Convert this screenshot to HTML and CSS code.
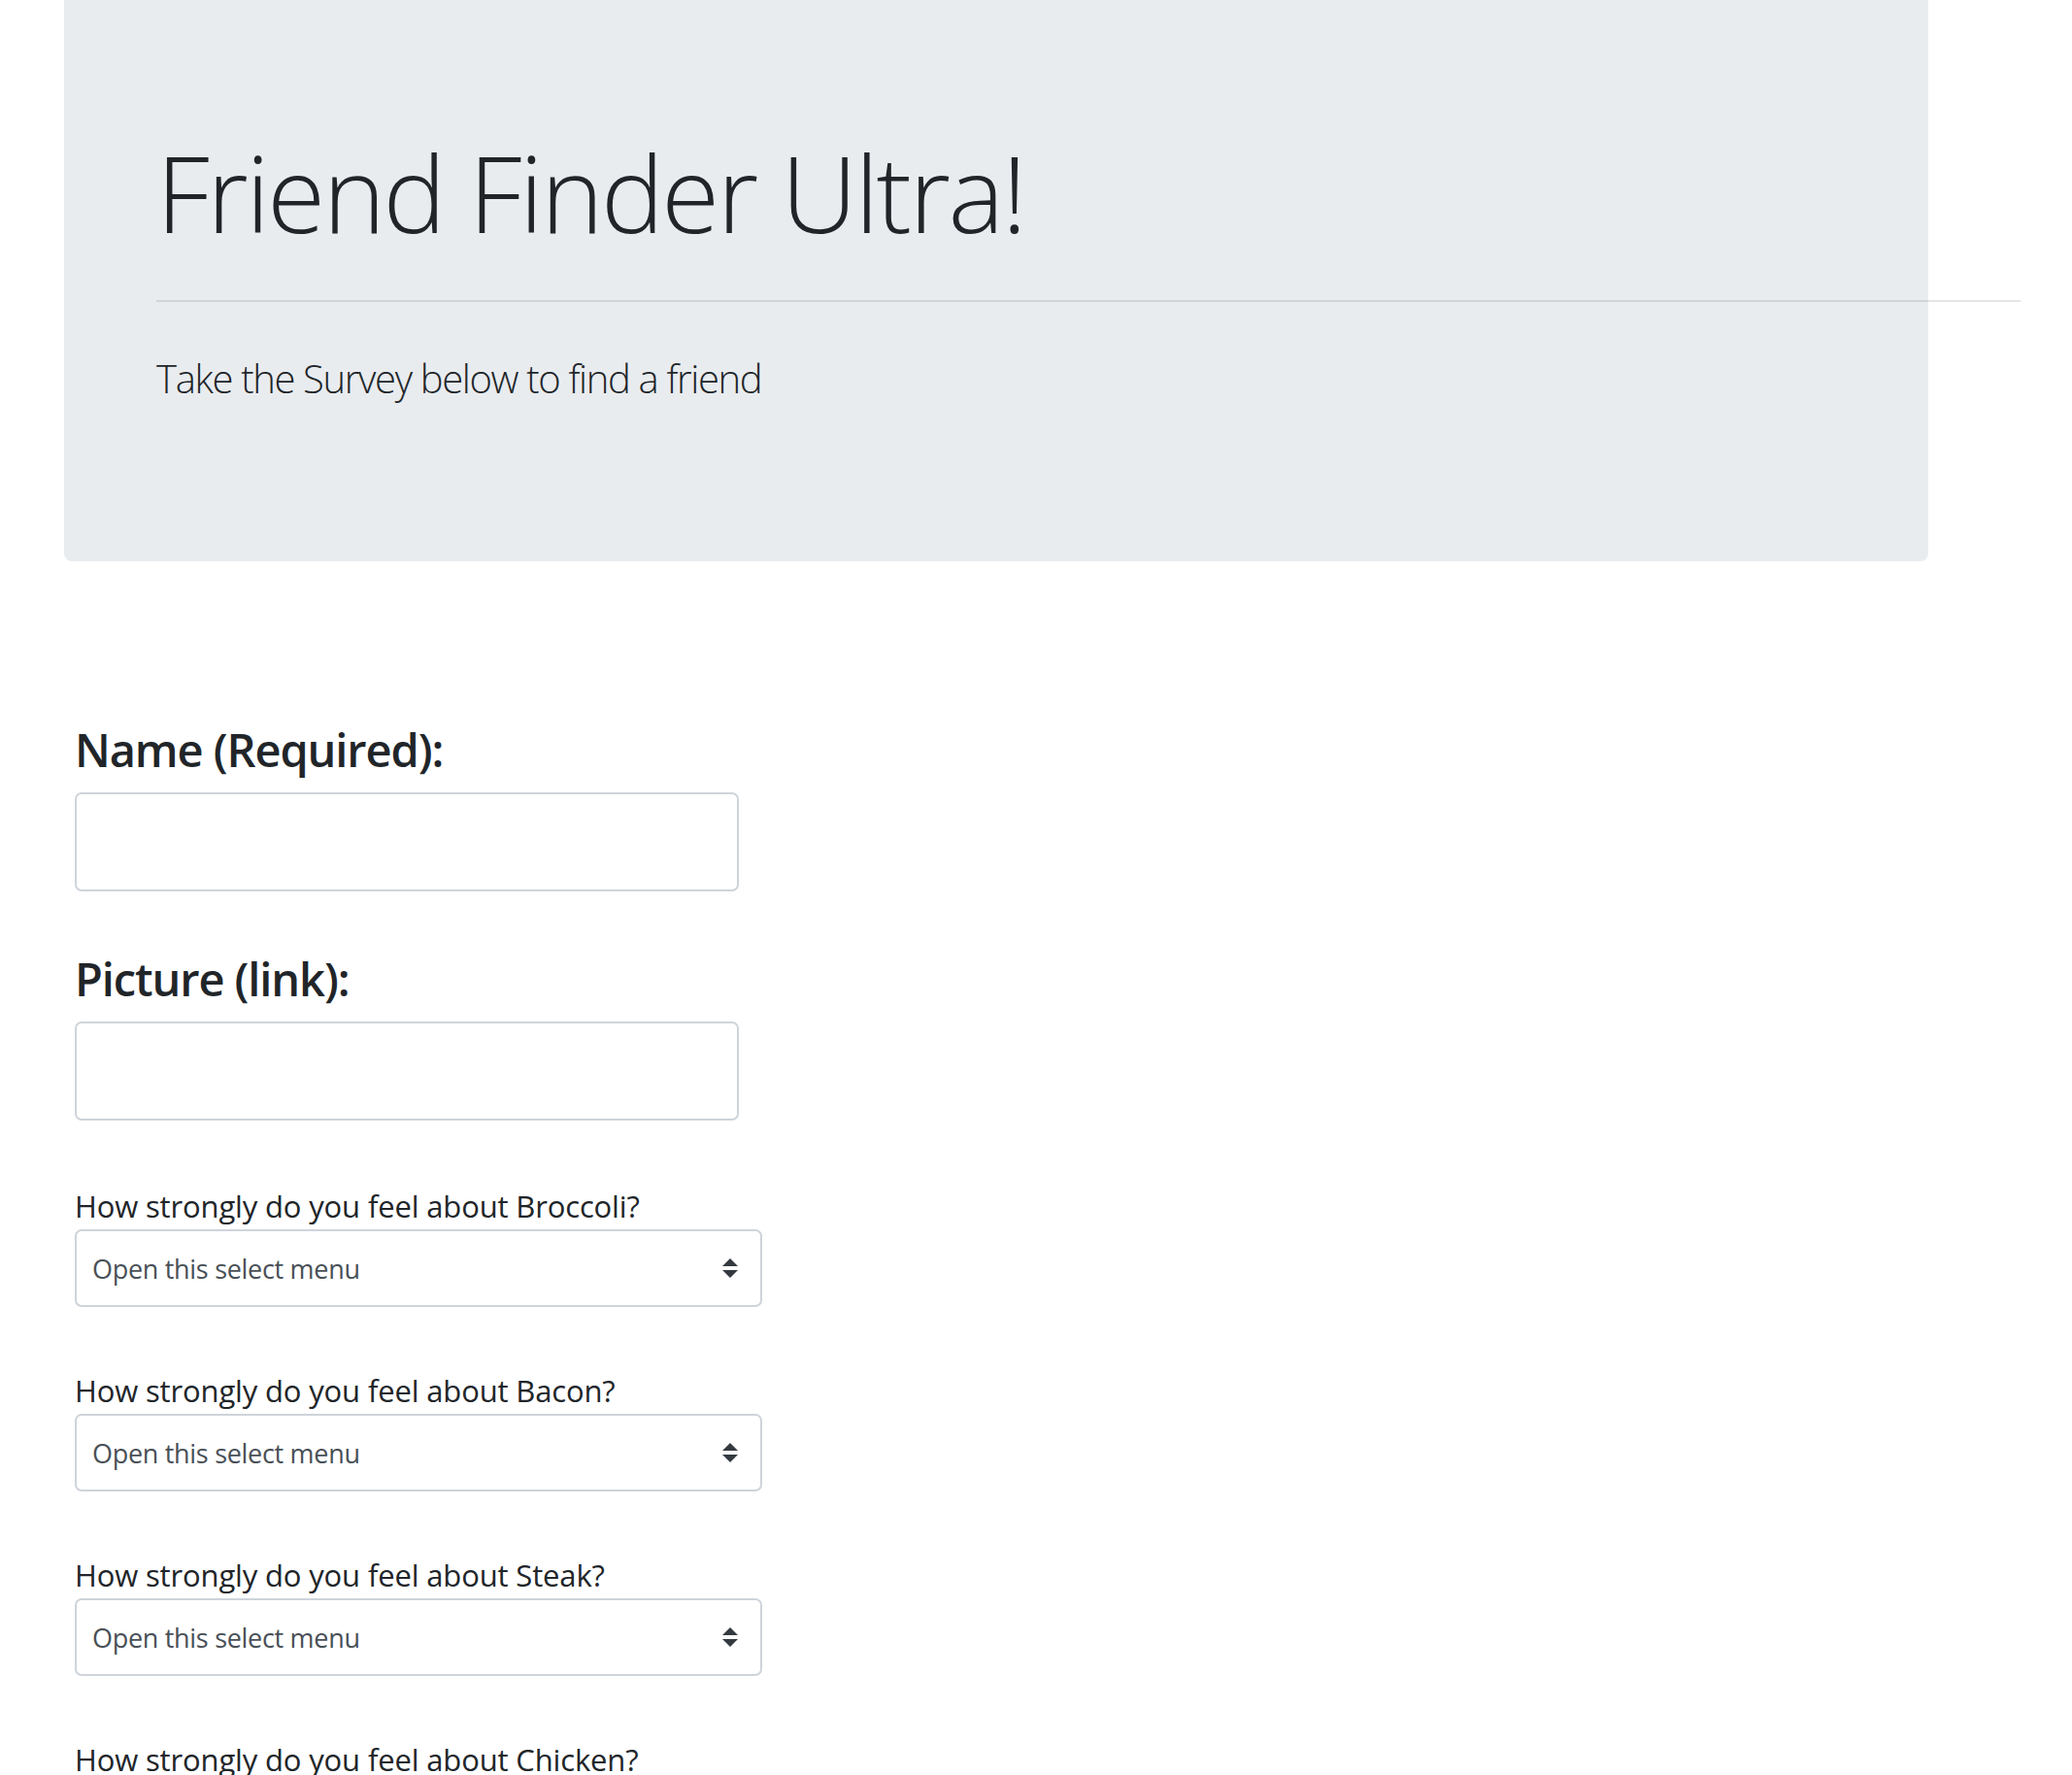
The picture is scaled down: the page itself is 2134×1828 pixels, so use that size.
FILE: index.html
```html
<!DOCTYPE html>
<html lang="en">
<head>
<meta charset="utf-8">
<title>Friend Finder Ultra!</title>
<link rel="stylesheet" href="styles.css">
</head>
<body>
<div class="jumbotron">
  <h1 class="display">Friend Finder Ultra!</h1>
  <hr class="divider">
  <p class="lead">Take the Survey below to find a friend</p>
</div>
<form class="survey">
  <div class="field">
    <label class="big-label" for="name">Name (Required):</label>
    <input class="text-input" id="name" type="text">
  </div>
  <div class="field">
    <label class="big-label" for="pic">Picture (link):</label>
    <input class="text-input" id="pic" type="text">
  </div>
  <div class="question">
    <label class="q-label" for="q1">How strongly do you feel about Broccoli?</label>
    <div class="select-wrap">
      <select class="custom-select" id="q1"><option>Open this select menu</option></select>
      <svg class="arrow" viewBox="0 0 4 5" width="16" height="20"><path d="M2 0L0 2h4zm0 5L0 3h4z" fill="#343a40"/></svg>
    </div>
  </div>
  <div class="question">
    <label class="q-label" for="q2">How strongly do you feel about Bacon?</label>
    <div class="select-wrap">
      <select class="custom-select" id="q2"><option>Open this select menu</option></select>
      <svg class="arrow" viewBox="0 0 4 5" width="16" height="20"><path d="M2 0L0 2h4zm0 5L0 3h4z" fill="#343a40"/></svg>
    </div>
  </div>
  <div class="question">
    <label class="q-label" for="q3">How strongly do you feel about Steak?</label>
    <div class="select-wrap">
      <select class="custom-select" id="q3"><option>Open this select menu</option></select>
      <svg class="arrow" viewBox="0 0 4 5" width="16" height="20"><path d="M2 0L0 2h4zm0 5L0 3h4z" fill="#343a40"/></svg>
    </div>
  </div>
  <div class="question">
    <label class="q-label" for="q4">How strongly do you feel about Chicken?</label>
    <div class="select-wrap">
      <select class="custom-select" id="q4"><option>Open this select menu</option></select>
      <svg class="arrow" viewBox="0 0 4 5" width="16" height="20"><path d="M2 0L0 2h4zm0 5L0 3h4z" fill="#343a40"/></svg>
    </div>
  </div>
</form>
</body>
</html>
```
FILE: styles.css
```css
html, body {
  margin: 0;
  padding: 0;
  background: #ffffff;
}
body {
  font-family: "Open Sans", "Noto Sans", sans-serif;
  color: #212529;
}
.jumbotron {
  margin: 0 0 0 66px;
  width: 1920px;
  box-sizing: border-box;
  background: #e9ecef;
  border-radius: 0 0 8px 8px;
  padding: 131px 96px 157px 95px;
}
.display {
  margin: 0;
  font-size: 109px;
  font-weight: 300;
  line-height: 134px;
  letter-spacing: -2.5px;
}
.divider {
  margin: 44px 0 0 0;
  width: 1920px;
  height: 0;
  border: 0;
  border-top: 2px solid rgba(0, 0, 0, 0.1);
}
.lead {
  margin: 47px 0 0 0;
  font-size: 40px;
  font-weight: 300;
  line-height: 63px;
  letter-spacing: -1.35px;
}
.survey {
  margin: 0 0 0 77px;
  padding-top: 164px;
}
.field {
  display: flex;
  flex-direction: column;
  align-items: flex-start;
}
.field + .field {
  margin-top: 60px;
}
.big-label {
  font-size: 47px;
  font-weight: 600;
  line-height: 60px;
  letter-spacing: -1.1px;
  margin-bottom: 14px;
}
.text-input {
  width: 684px;
  height: 102px;
  box-sizing: border-box;
  border: 2px solid #ced4da;
  border-radius: 7px;
  background: #fff;
  margin: 0;
}
.question {
  margin-top: 64px;
  display: flex;
  flex-direction: column;
  align-items: flex-start;
}
.field + .question {
  margin-top: 66px;
}
.q-label {
  font-size: 31px;
  line-height: 44px;
  letter-spacing: -0.15px;
  margin-bottom: 2px;
}
.select-wrap {
  position: relative;
  width: 708px;
  height: 80px;
}
.custom-select {
  -webkit-appearance: none;
  appearance: none;
  width: 708px;
  height: 80px;
  box-sizing: border-box;
  border: 2px solid #ced4da;
  border-radius: 7px;
  background: #fff;
  padding: 0 60px 0 16px;
  font-family: "Open Sans", "Noto Sans", sans-serif;
  font-size: 27px;
  letter-spacing: -0.3px;
  color: #495057;
  margin: 0;
}
.arrow {
  position: absolute;
  right: 25px;
  top: 30px;
  pointer-events: none;
}
```
